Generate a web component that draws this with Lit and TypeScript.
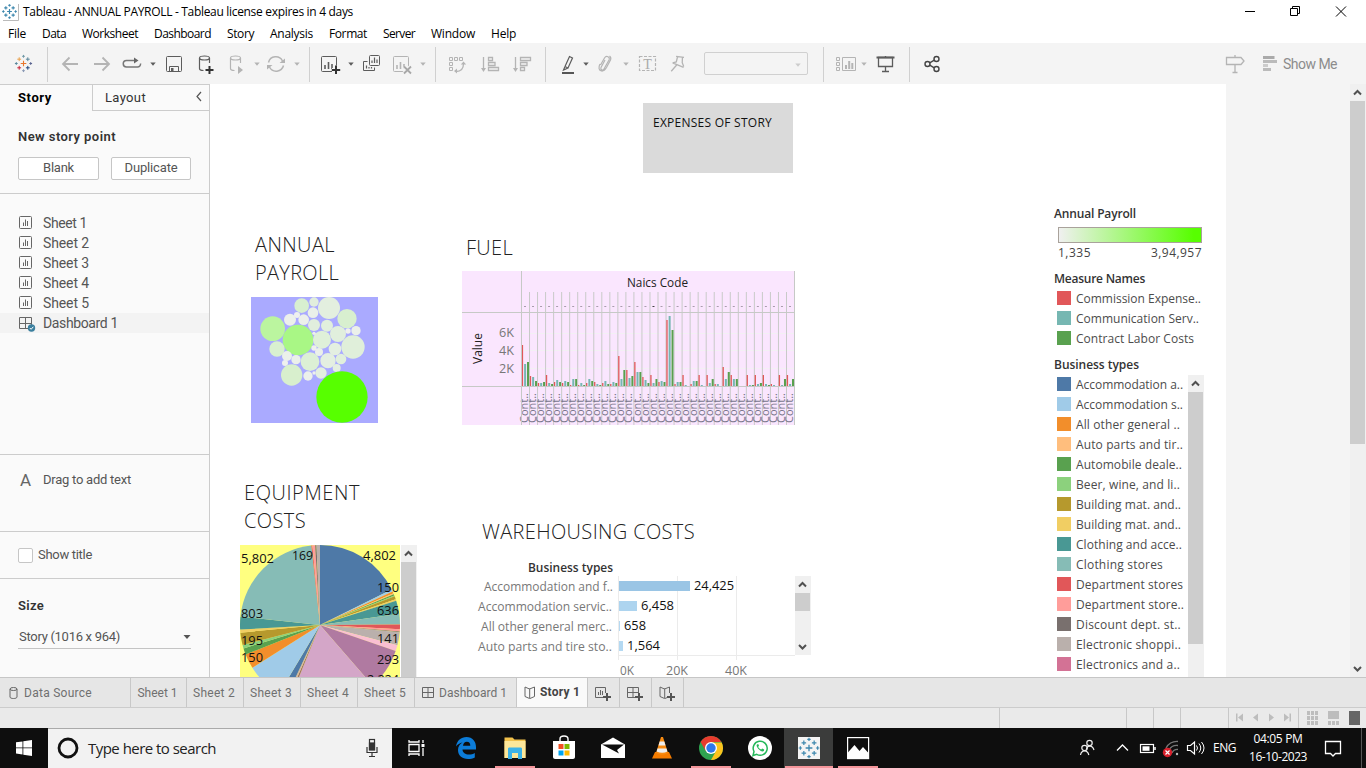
import { LitElement, html, svg, css, unsafeCSS, nothing } from "lit";
import { customElement, property } from "lit/decorators.js";

/* Text tracked so that it fills a given width. */
@customElement("fit-text")
class FitText extends LitElement {
  @property() text = "";
  @property({ type: Number }) w = 0;
  static styles = css`
    :host { display: inline-block; white-space: pre; flex: none; }
    span { display: inline-block; }
  `;
  render() {
    return html`<span>${this.text}</span>`;
  }
  updated() {
    const s = this.renderRoot.querySelector("span") as HTMLElement;
    s.style.letterSpacing = "0px";
    const natural = s.getBoundingClientRect().width;
    if (this.w && natural) s.style.letterSpacing = (this.w - natural) / this.text.length + "px";
  }
}

const t = (text: string, w: number, cls = "") => html`<fit-text class=${cls} .text=${text} .w=${w}></fit-text>`;

/* SVG text with a fixed advance. */
const st = (text: string, x: number, y: number, w: number, cls: string) =>
  svg`<text x=${x} y=${y} textLength=${w} lengthAdjust="spacingAndGlyphs" class=${cls}>${text}</text>`;

const G = "#b4b4b4";
const D = "#5c5c5c";

const plus = (x: number, y: number, r: number, c: string, w = 1) =>
  svg`<path d="M${x - r} ${y}H${x + r}M${x} ${y - r}V${y + r}" stroke=${c} stroke-width=${w} fill="none"/>`;

const mark = (cx: number, cy: number, s: number, c: string[], w: number) => svg`
  ${plus(cx, cy, 2.8 * s, c[0], w * 1.1)}
  ${plus(cx - 4.3 * s, cy - 4.3 * s, 1.9 * s, c[1], w)}${plus(cx + 4.3 * s, cy - 4.3 * s, 1.9 * s, c[2], w)}
  ${plus(cx - 4.3 * s, cy + 4.3 * s, 1.9 * s, c[3], w)}${plus(cx + 4.3 * s, cy + 4.3 * s, 1.9 * s, c[4], w)}
  ${plus(cx, cy - 7.2 * s, 1.4 * s, c[5], w)}${plus(cx, cy + 7.2 * s, 1.4 * s, c[6], w)}
  ${plus(cx - 7.2 * s, cy, 1.4 * s, c[7], w)}${plus(cx + 7.2 * s, cy, 1.4 * s, c[8], w)}`;
const BLUES = Array(9).fill("#3d87ad");
const BRAND = ["#e8762c", "#e8a04c", "#5b879b", "#c72035", "#1f457e", "#7199a6", "#8a99b5", "#59879b", "#5c6692"];

const ic = (body: unknown, w = 24) => html`<svg width=${w} height="24" viewBox="0 0 ${w} 24" fill="none">${body}</svg>`;
const caret = (c: string) => ic(svg`<path d="M1.300 10.500h5.400L4 13.700z" fill=${c}/>`, 8);
const sep = () => html`<i class="sep"></i>`;
const bars = (c: string) => svg`<rect x="3.500" y="4.500" width="15" height="15" rx="1" stroke=${c}/><path d="M7 17v-4M10.500 17v-7M14 17v-5" stroke=${c} stroke-width="1.600"/>`;
const db = svg`<ellipse cx="10.500" cy="6" rx="5" ry="2" /><path d="M5.500 6v10.500c0 1.300 2 2 4 2M15.500 6v5" />`;

/* Toolbar: left edge of each tool and its drawing. */
const TOOLS: [number, unknown][] = [
  [12, ic(mark(11.5, 11.5, 1, BRAND, 1))],
  [47, sep()],
  [58, ic(svg`<path d="M20 12H5M11.500 5.500L5 12l6.500 6.500" stroke=${G} stroke-width="1.800"/>`)],
  [90, ic(svg`<path d="M4 12h15M12.500 5.500L19 12l-6.500 6.500" stroke=${G} stroke-width="1.800"/>`)],
  [120, ic(svg`<path d="M15 8.500H6.500a3 3 0 0 0 0 6.500H17.500a3 3 0 0 0 3-3.500" stroke="#777" stroke-width="1.500"/><path d="M14 5.500l4.500 3L14 11.500z" fill="#666"/>`)],
  [148.5, caret(D)],
  [162, ic(svg`<rect x="4.500" y="4.500" width="15" height="15" rx="1" stroke=${D}/><path d="M7.500 19.500v-5h9v5" stroke=${D}/><rect x="9" y="16" width="2.500" height="3.500" fill=${D}/>`)],
  [194, ic(svg`<g stroke=${D} stroke-width="1.200">${db}</g><path d="M15.500 14v8M11.500 18h8" stroke="#333" stroke-width="2"/>`)],
  [225, ic(svg`<g stroke=${G} stroke-width="1.200">${db}</g><path d="M13 14l5 4-5 4z" fill=${G}/>`)],
  [252.5, caret(G)],
  [264, ic(svg`<path d="M4.500 10.500a7.500 7.500 0 0 1 14-1.500M19.500 13.500a7.500 7.500 0 0 1-14 1.500" stroke=${G} stroke-width="1.500"/><path d="M21 6.500V11h-5.500zM3 17.500V13h5.500z" fill=${G}/>`)],
  [292.5, caret(G)],
  [309, sep()],
  [318, ic(svg`${bars(D)}<path d="M18 13.500v8.500M14 18h8" stroke="#f4f4f4" stroke-width="4"/><path d="M18 13.500v8.500M13.800 18h8.400" stroke="#333" stroke-width="2"/>`)],
  [346.5, caret(D)],
  [359, ic(svg`<rect x="10.500" y="3.500" width="10" height="10" rx="1" stroke=${D}/><path d="M13 11V8.500M15.500 11V5.500M18 11V7.500" stroke=${D} stroke-width="1.200"/><path d="M8.500 9.500h-4v9h11v-3" stroke=${D}/><path d="M7.500 16.500v-3M10 16.500v-1.500M12.500 16.500v-1.500" stroke=${D} stroke-width="1.200"/>`)],
  [390, ic(svg`${bars(G)}<path d="M14 14.500l7 7M21 14.500l-7 7" stroke="#f4f4f4" stroke-width="4"/><path d="M14 14.500l7 7M21 14.500l-7 7" stroke="#a8a8a8" stroke-width="1.800"/>`)],
  [418.5, caret(G)],
  [435, sep()],
  [445, ic(svg`<g stroke=${G}><path d="M4.500 5.500h3v3h-3zM9.500 5.500h3v3h-3zM14.500 5.500h3v3h-3zM4.500 10.500h3v3h-3zM4.500 15.500h3v3h-3z"/><path d="M11 19.500c5.500 0 7.500-3 7.500-8" stroke-width="1.300"/></g><path d="M15.800 12.500l2.700-3 2.700 3zM12 16.500v5l-3-2.500z" fill=${G}/>`)],
  [478, ic(svg`<g stroke=${G} stroke-width="1.300"><path d="M5.500 5v13M10.500 5.500h4v3h-4zM10.500 10.500h6.500v3h-6.500zM10.500 15.500h10v3h-10z"/></g><path d="M3 16h5l-2.500 4z" fill=${G}/>`)],
  [510, ic(svg`<g stroke=${G} stroke-width="1.300"><path d="M5.500 5v13M10.500 5.500h10v3h-10zM10.500 10.500h6.500v3h-6.500zM10.500 15.500h4v3h-4z"/></g><path d="M3 16h5l-2.500 4z" fill=${G}/>`)],
  [545, sep()],
  [556, ic(svg`<path d="M13.500 4.500l3 1.500-4.500 10-3-1.500zM9 14.500L7.500 18l4.500-2" stroke=${D} stroke-width="1.200"/><path d="M6 21h12" stroke="#555" stroke-width="2"/>`)],
  [581.5, caret(D)],
  [593, ic(svg`<path d="M7.500 13l4-7c1.800-3 6-1 4.500 2l-5 9c-1 2-4 .8-3-1.500l4-7.500M7 12c-2 3.500-1 6.500 1.500 7s3.500-1 5-3.500l4-7.500c.8-2 .3-3-1-4" stroke=${G} stroke-width="1.200"/>`)],
  [621.5, caret(G)],
  [635, ic(svg`<rect x="4.500" y="4.500" width="16" height="14" stroke=${G} stroke-dasharray="3 1.500" stroke-width="1.200"/><text x="8.300" y="16.500" class="serif">T</text>`)],
  [665, ic(svg`<path d="M10 4.500h8M11.500 5l-.5 5-3.500 1.500M16.500 5l.5 5 2 3.500M7.500 11.500l11.500 3M11.800 13l-4.500 7" transform="rotate(8 12 12)" stroke=${G} stroke-width="1.300"/>`)],
  [704, html`<span class="combo">${caret("#ccc")}</span>`],
  [823, sep()],
  [834, ic(svg`<path d="M2.500 5.500h3v3h-3zM2.500 10.500h3v3h-3zM2.500 15.500h3v3h-3zM8.500 5.500h13v13h-13z" stroke=${G}/><path d="M12 17v-4M15.200 17V9M18.300 17v-6" stroke=${G} stroke-width="2"/>`)],
  [859.5, caret(G)],
  [873, ic(svg`<path d="M3.500 5.500h18" stroke=${D} stroke-width="2"/><path d="M5.500 5.500h14v9h-14zM12.500 4v2M12.500 14.500v5M9 19.500h7" stroke=${D} stroke-width="1.300"/>`)],
  [909, sep()],
  [920, ic(svg`<g stroke="#444" stroke-width="1.400"><circle cx="7.500" cy="12" r="2.500"/><circle cx="16.500" cy="7" r="2.500"/><circle cx="16.500" cy="17" r="2.500"/><path d="M9.700 10.800l4.600-2.600M9.700 13.200l4.600 2.600"/></g>`)],
  [1223, ic(svg`<path d="M3.500 5.500h14.500l3 3.500-3 3.500H3.500zM12 3v2.500M12 12.500v7.500M9.500 20.500h5" stroke=${G} stroke-width="1.300"/>`)],
  [1259, ic(svg`<path d="M4 5.500h11.500" stroke="#aaa" stroke-width="3"/><path d="M4 9.500h14M4 17.500h8" stroke="#bbb" stroke-width="3"/><path d="M4 13.500h5" stroke="#ccc" stroke-width="3"/>`)],
  [1283, html`<span class="showme">${t("Show Me", 54)}</span>`],
];

/* Notification area, same scheme. */
const TRAY: [number, unknown][] = [
  [1075, ic(svg`<g stroke="#eee" stroke-width="1.200"><circle cx="14.500" cy="7" r="2.700"/><path d="M11.500 13c1-4 6-4 7.500 1"/><circle cx="9.500" cy="12" r="2.700"/><path d="M5.500 19c1-5.500 7-5.500 8.300 0"/></g>`)],
  [1110, ic(svg`<path d="M7 14.500l5.500-5.500 5.500 5.500" stroke="#fff" stroke-width="1.300"/>`)],
  [1135, ic(svg`<rect x="5.500" y="8.500" width="13" height="8" stroke="#fff" stroke-width="1.200"/><rect x="7.500" y="10.300" width="7" height="4.500" fill="#fff"/><path d="M20 11v3" stroke="#fff" stroke-width="1.500"/>`)],
  [1159, ic(svg`<g stroke="#777" stroke-width="1.300"><path d="M7 12A13 13 0 0 1 19 5.500M10 14A9 9 0 0 1 19 9.500M13 17A6 6 0 0 1 19 13.500"/></g><circle cx="18" cy="18" r="1.200" fill="#bbb"/><circle cx="8.500" cy="16.500" r="4.700" fill="#d8202c"/><path d="M6.500 14.500l4 4M10.500 14.500l-4 4" stroke="#fff" stroke-width="1.200"/>`)],
  [1183, ic(svg`<path d="M4.500 9.500h3l4-3.500v12l-4-3.500h-3z" stroke="#fff" stroke-width="1.200"/><path d="M13.500 9.500q2 2.500 0 5M16 7.500q3.500 4.500 0 9M18.500 6q5 6 0 12" stroke="#fff"/>`)],
  [1213, html`<span class="eng">${t("ENG", 23)}</span>`],
  [1249, html`<span class="clock"><span>${t("04:05 PM", 49)}</span><span>${t("16-10-2023", 58)}</span></span>`],
  [1321, ic(svg`<path d="M4.500 5.500h15v12h-5l-2.500 2.500-2.500-2.500h-5z" stroke="#fff" stroke-width="1.300"/>`)],
];

const columns = (list: [number, unknown][], end: number) =>
  unsafeCSS(list.map(([x], i) => (i + 1 < list.length ? list[i + 1][0] : end) - x + "px").join(" "));

const MENU: [string, number][] = [
  ["File", 18], ["Data", 24], ["Worksheet", 56], ["Dashboard", 57], ["Story", 27],
  ["Analysis", 43], ["Format", 38], ["Server", 32], ["Window", 44], ["Help", 25],
];

const FUEL = [
  [123, 66, 72], [30, 27, 15], [9, 9, 12], [33, 9, 6], [12, 18, 12], [9, 15, 12], [3, 21, 21], [3, 9, 3], [9, 21, 15],
  [12, 6, 3], [9, 15, 6], [6, 12, 9], [90, 21, 48], [48, 24, 30], [72, 42, 42], [27, 18, 9], [33, 9, 21], [12, 15, 12],
  [198, 210, 168], [6, 12, 12], [33, 3, 0], [6, 15, 15], [33, 3, 0], [33, 9, 21], [6, 6, 0], [57, 21, 42], [33, 21, 21],
  [0, 0, 0], [33, 3, 3], [33, 6, 9], [33, 6, 3], [6, 3, 0], [33, 3, 21], [33, 6, 21],
];

/* Bubbles: x, y, radius, fill. */
const BUBBLES: [number, number, number, string][] = [
  [128, 146, 37, "#bbf59f"], [204, 180, 46, "#a9f785"], [215, 77, 22, "#d8efd0"], [252, 66, 14, "#e1eedd"], [297, 84, 33, "#e3efdf"],
  [351, 116, 29, "#d8efcf"], [180, 119, 18, "#ecf0eb"], [201, 105, 9, "#eef0ee"], [221, 119, 16, "#ecf0eb"], [249, 98, 16, "#eaf0e9"],
  [252, 135, 18, "#e1eedd"], [291, 137, 18, "#e1efdd"], [324, 162, 24, "#e1efdd"], [354, 153, 8, "#eef0ee"], [378, 152, 14, "#ebf0ea"],
  [276, 179, 27, "#dff0d9"], [252, 160, 5, "#eef0ee"], [369, 201, 35, "#e0efda"], [315, 207, 19, "#e4efe1"], [141, 207, 23, "#d9f0d0"],
  [252, 204, 8, "#eef0ee"], [267, 216, 12, "#ebf0ea"], [171, 228, 15, "#ebf0ea"], [165, 249, 9, "#eef0ee"], [198, 239, 14, "#ebf0ea"],
  [240, 245, 28, "#dcf0d5"], [294, 242, 23, "#e4efe1"], [333, 237, 16, "#e1efdd"], [320, 264, 12, "#e4efe1"], [185, 285, 32, "#d8efcd"],
  [234, 288, 14, "#ecf0eb"], [252, 279, 5, "#eef0ee"], [273, 279, 17, "#e4efe0"], [336, 351, 77, "#57ff00"],
];

/* Pie slices: end angle in degrees clockwise from noon, fill. */
const PIE: [number, string][] = [
  [63.7, "#4e79a7"], [65.3, "#a0cbe8"], [66.7, "#f28e2b"], [67.3, "#ffbe7d"], [68.3, "#59a14f"], [69, "#8cd17d"], [71.2, "#b6992d"],
  [72.3, "#f1ce63"], [82, "#499894"], [89.7, "#86bcb6"], [93, "#e15759"], [94.6, "#ff9d9a"], [95.2, "#79706e"], [104.7, "#bab0ac"],
  [109, "#fabfd2"], [139, "#b07aa1"], [202, "#d4a6c8"], [203.5, "#9d7660"], [205, "#d7b5a6"], [210.8, "#4e79a7"], [237.7, "#a0cbe8"],
  [248.4, "#f28e2b"], [253, "#59a14f"], [255.5, "#8cd17d"], [264.5, "#b6992d"], [266.7, "#f1ce63"], [276, "#499894"], [353.8, "#86bcb6"],
  [354.5, "#e15759"], [356.5, "#ff9d9a"], [357.5, "#79706e"], [360, "#bab0ac"],
];
const slice = (a: number, b: number, c: string) => {
  const p = (d: number) => `${80 + 80 * Math.sin((d * Math.PI) / 180)} ${80 - 80 * Math.cos((d * Math.PI) / 180)}`;
  return svg`<path d="M80 80L${p(a)}A80 80 0 0 1 ${p(b)}z" fill=${c}/>`;
};

const TYPES: [string, number, string][] = [
  ["Accommodation a..", 107, "#4e79a7"], ["Accommodation s..", 107, "#a0cbe8"], ["All other general ..", 104, "#f28e2b"],
  ["Auto parts and tir..", 107, "#ffbe7d"], ["Automobile deale..", 106, "#59a14f"], ["Beer, wine, and li..", 104, "#8cd17d"],
  ["Building mat. and..", 105, "#b6992d"], ["Building mat. and..", 105, "#f1ce63"], ["Clothing and acce..", 106, "#499894"],
  ["Clothing stores", 87, "#86bcb6"], ["Department stores", 107, "#e15759"], ["Department store..", 108, "#ff9d9a"],
  ["Discount dept. st..", 105, "#79706e"], ["Electronic shoppi..", 105, "#bab0ac"], ["Electronics and a..", 104, "#d37295"],
];

const scrollArrow = (up: boolean) => html`<svg class="arrow" width="15" height="17" viewBox="0 0 15 17" fill="none">
  <path d=${up ? "M4 10.500L7.500 7L11 10.500" : "M4 7L7.500 10.500L11 7"} stroke="#505050" stroke-width="2"/></svg>`;

const sheetIcon = html`<svg width="14" height="14" viewBox="0 0 14 14" fill="none" stroke="#666"><rect x=".5" y=".5" width="12" height="12" rx="1"/><path d="M4.500 10V6.500M6.500 10V3.500M8.500 10V5"/></svg>`;
const dashIcon = html`<svg width="18" height="17" viewBox="0 0 18 17" fill="none" stroke="#666"><path d="M.5 2.500h12v11H.5zM6.500 2.500v11M.5 8.500h12"/><circle cx="12.500" cy="13" r="3.700" fill="#3b7f9e" stroke="none"/><path d="M10.800 13l1.300 1.300 2.200-2.500" stroke="#fff"/></svg>`;
const grid = svg`<path d="M.5 2.500h11v10H.5zM6 2.500v10M.5 7.500h11" />`;
const book = svg`<path d="M1 2l4 1.800h1L10.500 2v9.500L6 13.500H5.500L1 11.500zM5.700 4v9"/>`;
const addMark = svg`<path d="M12 8v8M8 12h8" stroke="#e6e6e6" stroke-width="4"/><path d="M12 8v8M8 12h8" stroke="#555" stroke-width="2"/>`;
const tabIcon = (b: unknown, w = 14) => html`<svg width=${w} height="16" viewBox="0 0 ${w} 16" fill="none" stroke="#666">${b}</svg>`;

const app = (b: unknown, cls = "") => html`<span class="app ${cls}"><svg width="30" height="30" viewBox="0 0 30 30" fill="none">${b}</svg></span>`;

@customElement("app-root")
class AppRoot extends LitElement {
  static styles = css`
    :host { display: flex; flex-direction: column; width: 1366px; height: 768px; overflow: hidden; background: #fff;
      font: 12px/20px "Open Sans", "Noto Sans", sans-serif; color: #000; }
    * { box-sizing: border-box; }
    svg { display: block; flex: none; }
    .title { display: flex; height: 23px; padding-left: 2px; align-items: center; }
    .title .name { margin-left: 4px; flex: 1; }
    .menu { display: flex; gap: 16px; height: 20px; padding-left: 8px; line-height: 21px; }
    .toolbar { display: grid; grid-template-columns: ${columns(TOOLS, 1354)}; height: 41px; padding: 9px 0 0 12px; background: #f4f4f4; }
    .sep { display: block; width: 1px; height: 35px; margin-top: -5px; background: #d0d0d0; }
    .serif { font: 14px "Liberation Serif", serif; fill: #aaa; }
    .combo { display: flex; justify-content: flex-end; width: 104px; height: 23px; padding-right: 5px; border: 1px solid #d0d0d0; border-radius: 2px; }
    .showme { font: 14px/24px Roboto, sans-serif; color: #8c8c8c; }

    .main { display: flex; height: 593px; }
    .side { display: flex; flex-direction: column; width: 210px; border-right: 1px solid #ccc; border-top: 1px solid #ccc; background: #fafafa;
      font: 13px/20px Roboto, "Open Sans", sans-serif; color: #555; }
    .sidetabs { display: flex; height: 26px; }
    .sidetabs .on { width: 92px; padding-left: 18px; line-height: 25px; font-weight: 700; color: #000; }
    .sidetabs .off { display: flex; flex: 1; justify-content: space-between; padding: 0 6px 0 12px; border-left: 1px solid #ccc; border-bottom: 1px solid #ccc; line-height: 25px; color: #333; }
    .pane { border-bottom: 1px solid #ccc; padding-left: 18px; }
    .head { font-weight: 600; color: #333; }
    .p1 { height: 83px; padding-top: 16px; }
    .btns { display: flex; gap: 12px; margin-top: 10px; }
    .btns span { display: flex; justify-content: center; width: 81px; height: 23px; border: 1px solid #c6c6c6; border-radius: 2px; background: #fff; line-height: 20px; }
    .btns span + span { width: 80px; }
    .p2 { height: 261px; padding: 19px 0 0; }
    .sheet { display: flex; align-items: center; gap: 10px; height: 20px; padding-left: 19px; font-size: 14px; line-height: 22px; }
    .sheet.sel { gap: 6px; background: #f3f3f3; }
    .p3 { height: 77px; padding-top: 15px; display: flex; }
    .p3 b { width: 25px; padding-left: 2px; font: 17px/20px Roboto, sans-serif; color: #666; }
    .p4 { display: flex; align-items: center; height: 47px; gap: 5px; }
    .box { width: 15px; height: 15px; border: 1px solid #c6c6c6; border-radius: 2px; background: #fff; }
    .p5 { padding: 17px 0 0 18px; }
    .size { display: flex; justify-content: space-between; width: 173px; margin-top: 11px; padding: 0 0 1px 1px; border-bottom: 1px solid #c4c4c4; }

    .canvas { width: 1016px; overflow: hidden; background: #fff; color: #333; }
    .caption { width: 150px; height: 70px; margin: 19px auto 0; padding: 10px; background: #dadada; color: #111; }
    .objects { display: flex; height: 504px; }
    .colA { width: 252px; }
    .colB { width: 592px; }
    .colC { width: 172px; padding-top: 31px; }
    .h { font: 300 20px/28px "Open Sans", "Noto Sans", sans-serif; color: #222; }
    .h fit-text { display: block; }
    .hA { padding: 58px 0 0 45px; }
    .bub { margin: 10px 0 0 41px; }
    .hE { padding: 56px 0 0 34px; }
    .pie { display: flex; margin: 10px 0 0 30px; }
    .hF { padding: 61px 0 0 4px; }
    .fuel { margin-top: 9px; }
    .hW { padding: 93px 0 0 20px; }
    .ware { display: flex; margin: 10px 0 0 8px; }
    .v, .vl, .vm, .vs { font: 12px "Open Sans", "Noto Sans", sans-serif; fill: #111; }
    .vl { fill: #777; }
    .vs { font-weight: 600; fill: #333; }
    .vm { fill: #222; }
    .col { font: 10px "Open Sans", "Noto Sans", sans-serif; fill: #77758a; }
    .sb { display: flex; flex-direction: column; width: 16px; background: #f0f0f0; }
    .sb i { display: block; background: #cdcdcd; }
    .sbPie { height: 132px; margin-left: 1px; }
    .sbPie i { flex: 1; width: 15px; }
    .sbWare { height: 79px; margin-top: 20px; }
    .sbWare i { height: 18px; width: 15px; flex: none; }
    .sbLeg { height: 303px; }
    .sbLeg i { height: 252px; width: 15px; }
    .sbMain { height: 593px; margin-left: 1px; }
    .sbMain i { height: 343px; width: 15px; }
    .sbWare .arrow:last-child, .sbMain .arrow:last-child { margin-top: auto; }
    .lt { display: block; font-weight: 600; color: #333; }
    .ramp { width: 144px; height: 16px; margin: 3px 0 0 4px; border: 1px solid #a9a29b; background: linear-gradient(90deg, #f0f0f0, #57ff00 95%); }
    .range { display: flex; justify-content: space-between; width: 144px; margin-left: 4px; color: #444; }
    .mn, .bt { margin-top: 6px; }
    .leg { display: flex; align-items: center; gap: 5px; height: 20px; padding-left: 3px; color: #4c4c4c; }
    .leg svg { margin-top: -2px; }
    .biz { display: flex; }
    .biz > div:first-child { width: 134px; }
    .gutter { flex: 1; display: flex; justify-content: flex-end; background: #f4f4f4; }

    .tabs { display: grid; grid-template-columns: 131px 56px 57px 57px 57px 57px 102px 71px 32px 32px 32px 1fr; height: 31px;
      border-top: 1px solid #c6c6c6; border-bottom: 1px solid #ccc; background: #e6e6e6; font: 12px/30px Roboto, sans-serif; color: #707070; }
    .tabs > span { display: flex; align-items: center; justify-content: center; gap: 5px; height: 29px; padding-right: 2px; border-right: 1px solid #c8c8c8; }
    .tabs > span:first-child { justify-content: flex-start; padding-left: 8px; gap: 2px; }
    .tabs > span:last-child { border: 0; }
    .tabs .on { background: #fafafa; font-weight: 700; color: #444; gap: 4px; padding: 0; line-height: 29px; }
    .status { display: grid; grid-template-columns: 1000px 127px 27px 27px 48px 70px 1fr; height: 20px; background: #eaeaea; }
    .status > span { display: flex; align-items: center; border-right: 1px solid #c8c8c8; }
    .status > span:last-child { border: 0; }

    .taskbar { display: flex; height: 40px; background: #0e0e0e; color: #fff; }
    .start { display: flex; align-items: center; justify-content: center; width: 48px; }
    .search { display: flex; align-items: center; width: 344px; padding: 0 13px 1px 9px; border-top: 1px solid #aaa; background: #f2f2f2; color: #222; font-size: 15px; }
    .search fit-text { flex: 1; margin: -1px 0 0 9px; }
    .apps { display: flex; width: 683px; padding-left: 1px; }
    .app { display: flex; align-items: center; justify-content: center; width: 49px; height: 40px; }
    .app:first-child { width: 48px; }
    .run { background: linear-gradient(#f4959a, #f4959a) center bottom / 40px 2px no-repeat; }
    .cur { background: linear-gradient(#f4959a, #f4959a) center bottom / 48px 2px no-repeat #3b3c3b; }
    .tray { display: grid; grid-template-columns: ${columns(TRAY, 1361)}; padding-top: 8px; }
    .eng { line-height: 24px; }
    .clock { display: flex; flex-direction: column; width: 58px; height: 36px; margin-top: -6px; line-height: 18px; align-items: center; }
    .edge { margin-left: auto; width: 5px; border-left: 1px solid #555; }
  `;

  fuel() {
    const step = 8.03;
    return html`<svg class="fuel" width="333" height="154" viewBox="0 0 333 154" fill="none">
      <rect width="333" height="154" fill="#fae6fe"/>
      <path d="M60 62.500H332M60 79.500H332M60 97.500H332" stroke="#f3f0f4"/>
      ${FUEL.map((b, i) => {
        const x = 59.5 + i * step;
        return svg`${i ? svg`<path d="M${x} 21V154" stroke="#c8cac8"/>` : nothing}
          <path d="M${x + 2.5} 35.500h2" stroke=${i === 16 ? "#444" : "#a89cac"}/>
          <rect x=${x + 0.3} y=${115 - b[0] / 3} width="1.300" height=${b[0] / 3} fill="#e15759"/>
          <rect x=${x + 2.6} y=${115 - b[1] / 3} width="2" height=${b[1] / 3} fill="#76b7b2"/>
          <rect x=${x + 5.5} y=${115 - b[2] / 3} width="2.200" height=${b[2] / 3} fill="#59a14f"/>
          <text transform="translate(${x + 6.6} 152) rotate(-90)" textLength="30" lengthAdjust="spacingAndGlyphs" class="col">Cont..</text>`;
      })}
      <path d="M59.500 0V154M332.500 0V154M0 41.500H333M0 115.500H333" stroke="#c6c9c6"/>
      ${st("Naics Code", 165, 16, 61, "vm")}
      <text transform="translate(20 93) rotate(-90)" textLength="31" class="vm">Value</text>
      ${st("6K", 37, 66, 15, "vl")}${st("4K", 37, 84, 15, "vl")}${st("2K", 37, 102, 15, "vl")}
    </svg>`;
  }

  warehouse() {
    const rows: [string, number, number, number, string, number, string][] = [
      ["Accommodation and f..", 14, 129, 71, "24,425", 40, "#9ac5e5"],
      ["Accommodation servic..", 8, 134, 18, "6,458", 33, "#add4ef"],
      ["All other general merc..", 11, 131, 1, "658", 22, "#b5d9f2"],
      ["Auto parts and tire sto..", 8, 134, 4, "1,564", 33, "#b4d9f2"],
    ];
    return html`<svg width="325" height="121" viewBox="0 0 325 121" fill="none">
      <path d="M148.500 20V104M207.500 20V104M266.500 20V104M148 99.500H325" stroke="#ebebeb"/>
      ${st("Business types", 58, 16, 85, "vs")}
      ${rows.map((r, i) => svg`${st(r[0], r[1], 35 + i * 20, r[2], "vl")}
        <rect x="149" y=${25 + i * 20} width=${r[3]} height="10" fill=${r[6]}/>
        ${st(r[4], [224, 171, 154, 157][i], 34 + i * 20, r[5], "v")}`)}
      ${st("0K", 150, 119, 14, "vl")}${st("20K", 196, 119, 22, "vl")}${st("40K", 255, 119, 22, "vl")}
    </svg>`;
  }

  pie() {
    return html`<svg width="160" height="132" viewBox="0 0 160 132">
      <rect width="160" height="132" fill="#ffff80"/>
      ${PIE.map(([b, c], i) => slice(i ? PIE[i - 1][0] : 0, b, c))}
      ${st("5,802", 1, 18, 33, "v")}${st("169", 52, 15, 21, "v")}${st("4,802", 123, 15, 33, "v")}
      ${st("150", 137, 47, 22, "v")}${st("636", 137, 70, 22, "v")}${st("803", 1, 73, 22, "v")}
      ${st("195", 1, 100, 22, "v")}${st("141", 137, 98, 22, "v")}${st("150", 1, 117, 22, "v")}
      ${st("293", 137, 119, 22, "v")}${st("2,224", 127, 139, 32, "v")}
    </svg>`;
  }

  swatch(c: string) {
    return html`<svg width="14" height="14"><rect width="14" height="14" fill=${c}/></svg>`;
  }

  render() {
    return html`
      <div class="title">
        <svg width="17" height="18" viewBox="0 0 17 18"><path d="M16.500 1v16.500H1" stroke="#bbb" fill="none"/>${mark(7.5, 8.5, 0.85, BLUES, 1.1)}</svg>
        <span class="name">${t("Tableau - ANNUAL PAYROLL - Tableau license expires in 4 days", 330)}</span>
        <svg width="121" height="22" viewBox="0 0 121 22" fill="none" stroke="#000"><path d="M0 10.500h10M45.500 7.500h7v7h-7zM47.500 7.500v-2h7v7h-2M91 5.500l10 10M101 5.500l-10 10"/></svg>
      </div>
      <div class="menu">${MENU.map(([s, w]) => t(s, w))}</div>
      <div class="toolbar">${TOOLS.map(([, v]) => v)}</div>
      <div class="main">
        <div class="side">
          <div class="sidetabs">
            <span class="on">${t("Story", 34)}</span>
            <span class="off">${t("Layout", 41)}<svg width="8" height="24" viewBox="0 0 8 24" fill="none"><path d="M6 7L2 11.500l4 4.500" stroke="#555" stroke-width="1.200"/></svg></span>
          </div>
          <div class="pane p1">
            <div class="head">${t("New story point", 98)}</div>
            <div class="btns"><span>${t("Blank", 31)}</span><span>${t("Duplicate", 53)}</span></div>
          </div>
          <div class="pane p2">
            ${[1, 2, 3, 4, 5].map((n) => html`<div class="sheet">${sheetIcon}${t("Sheet " + n, n === 1 ? 44 : 46)}</div>`)}
            <div class="sheet sel">${dashIcon}${t("Dashboard 1", 75)}</div>
          </div>
          <div class="pane p3"><b>A</b>${t("Drag to add text", 88)}</div>
          <div class="pane p4"><i class="box"></i>${t("Show title", 54)}</div>
          <div class="p5">
            <div class="head">${t("Size", 26)}</div>
            <div class="size">${t("Story (1016 x 964)", 101)}<svg width="8" height="20" viewBox="0 0 8 20"><path d="M.5 8h7L4 12z" fill="#555"/></svg></div>
          </div>
        </div>
        <div class="canvas">
          <div class="caption">${t("EXPENSES OF STORY", 119)}</div>
          <div class="objects">
            <div class="colA">
              <div class="h hA">${t("ANNUAL", 80)}${t("PAYROLL", 84)}</div>
              <svg class="bub" width="127" height="126" viewBox="63 51 381 378"><rect x="63" y="51" width="381" height="378" fill="#aaaaff"/>
                ${BUBBLES.map(([x, y, r, c]) => svg`<circle cx=${x} cy=${y} r=${r} fill=${c}/>`)}</svg>
              <div class="h hE">${t("EQUIPMENT", 116)}${t("COSTS", 62)}</div>
              <div class="pie">${this.pie()}<div class="sb sbPie">${scrollArrow(true)}<i></i></div></div>
            </div>
            <div class="colB">
              <div class="h hF">${t("FUEL", 47)}</div>
              ${this.fuel()}
              <div class="h hW">${t("WAREHOUSING COSTS", 213)}</div>
              <div class="ware">${this.warehouse()}<div class="sb sbWare">${scrollArrow(true)}<i></i>${scrollArrow(false)}</div></div>
            </div>
            <div class="colC">
              <span class="lt">${t("Annual Payroll", 82)}</span>
              <div class="ramp"></div>
              <div class="range">${t("1,335", 33)}${t("3,94,957", 51)}</div>
              <span class="lt mn">${t("Measure Names", 91)}</span>
              <div class="leg">${this.swatch("#e15759")}${t("Commission Expense..", 125)}</div>
              <div class="leg">${this.swatch("#76b7b2")}${t("Communication Serv..", 123)}</div>
              <div class="leg">${this.swatch("#59a14f")}${t("Contract Labor Costs", 118)}</div>
              <span class="lt bt">${t("Business types", 85)}</span>
              <div class="biz">
                <div>${TYPES.map(([s, w, c]) => html`<div class="leg">${this.swatch(c)}${t(s, w)}</div>`)}</div>
                <div class="sb sbLeg">${scrollArrow(true)}<i></i></div>
              </div>
            </div>
          </div>
        </div>
        <div class="gutter"><div class="sb sbMain">${scrollArrow(true)}<i></i>${scrollArrow(false)}</div></div>
      </div>
      <div class="tabs">
        <span>${tabIcon(svg`<ellipse cx="5.500" cy="4" rx="3.500" ry="1.500"/><path d="M2 4v8c0 2 7 2 7 0V4"/>`)}${t("Data Source", 68)}</span>
        ${[1, 2, 3, 4, 5].map((n) => html`<span>${t("Sheet " + n, n === 1 ? 40 : 42)}</span>`)}
        <span>${tabIcon(grid, 12)}${t("Dashboard 1", 68)}</span>
        <span class="on">${tabIcon(book, 12)}${t("Story 1", 40)}</span>
        <span>${tabIcon(svg`<path d="M.5 2.500h10v10H.5zM3.500 10V7M5.500 10V5M7.500 10V6"/>${addMark}`, 16)}</span>
        <span>${tabIcon(svg`${grid}${addMark}`, 16)}</span>
        <span>${tabIcon(svg`${book}${addMark}`, 16)}</span>
        <span></span>
      </div>
      <div class="status">
        <span></span><span></span><span></span><span></span><span></span>
        <span><svg width="68" height="18" viewBox="0 0 68 18" fill="#bdbdbd"><path d="M7 5h1.500v8H7zM14 5v8L9 9zM29 5v8l-5-4zM40 5v8l5-4zM55 5v8l5-4zM60.500 5H62v8h-1.500z" transform="translate(0 -.5)"/></svg></span>
        <span><svg width="64" height="18" viewBox="0 0 64 18" fill="#bdbdbd">
          ${[2, 7, 12].map((y) => [8, 12, 16].map((x) => svg`<rect x=${x} y=${y} width="3" height="4"/>`))}
          <rect x="29" y="2" width="11" height="8"/><path d="M29 12h3v4h-3zM33 12h3v4h-3zM37 12h3v4h-3z"/>
          <rect x="50" y="2" width="11" height="14" fill="#666"/></svg></span>
      </div>
      <div class="taskbar">
        <span class="start"><svg width="16" height="16" viewBox="0 0 16 16" fill="#fff"><path d="M0 2.300L6.500 1.400v6.100H0zM7.300 1.300L16 0v7.500H7.300zM0 8.300h6.500v6.200L0 13.600zM7.300 8.300H16V16l-8.700-1.300z"/></svg></span>
        <div class="search">
          <svg width="22" height="24" viewBox="0 0 22 24"><circle cx="11" cy="12" r="9" fill="none" stroke="#111" stroke-width="2.800"/></svg>
          ${t("Type here to search", 128)}
          <svg width="14" height="20" viewBox="0 0 14 20" fill="none" stroke="#333" stroke-width="1.200"><rect x="4.500" y="1.500" width="5" height="10"/><rect x="4.500" y="5" width="5" height="7" fill="#333"/><path d="M2 9v5.500h10V9M7 14.500v4M4 18.500h6"/></svg>
        </div>
        <div class="apps">
          ${app(svg`<g stroke="#fff" stroke-width="1.300"><path d="M7 11.500h10v7H7zM7 7v2h10V7M7 23v-2h10v2M21 7v3M21 15v8"/></g><path d="M19.500 11h3v3h-3z" fill="#fff"/>`)}
          ${app(svg`<path fill="#0c7cd8" d="M5 13.500C6 7.500 10 4 15.500 4 21.500 4 25 8.500 25 14v2.500H11.500c.2 3.500 3 5 6.300 5 2.300 0 4.300-.6 6-1.600v4.600c-2 1-4.300 1.500-6.800 1.500-6 0-10-3.500-10-9 0-3.500 1.800-6 4.500-7.500C8.800 10 6.500 11.500 5 13.500zm7-.8h7.300c0-2.700-1.200-4-3.400-4-2.200 0-3.500 1.500-3.900 4z"/>`)}
          ${app(svg`<path d="M4.500 4.500h8l2 2h11V25h-21z" fill="#f2c14c"/><path d="M4.500 8h21v17h-21z" fill="#fde79a"/><path d="M8 26v-10c0-1 .5-1.500 1.500-1.500h11c1 0 1.500.5 1.500 1.500v10h-4v-6h-6v6z" fill="#3db3e8"/>`, "run")}
          ${app(svg`<path d="M11 8V6q0-3 4-3t4 3v2" stroke="#fff" stroke-width="1.400"/><path d="M4 8h22v16c0 1-1 2-2 2H6c-1 0-2-1-2-2z" fill="#fff"/><path d="M9.500 11h5v5h-5z" fill="#f25022"/><path d="M15.500 11h5v5h-5z" fill="#7fba00"/><path d="M9.500 17.500h5v5h-5z" fill="#00a4ef"/><path d="M15.500 17.500h5v5h-5z" fill="#ffb900"/>`)}
          ${app(svg`<path d="M3 11.500L15 4.500l12 7V25H3z" fill="#fff"/><path d="M4 11.500h22l-7 5.500 2 3.500z" fill="#0e0e0e"/>`)}
          ${app(svg`<path d="M8 19h14l3 6.500H5z" fill="#f57c00"/><path d="M14 4h2l5 16q-6 3.500-12 0z" fill="#f78b12"/><path d="M12.700 8.500h4.600l1.200 4h-7zM10.500 15.500h9l.9 3q-5 2.500-10.800 0z" fill="#eee"/>`)}
          ${app(svg`<circle cx="15" cy="15" r="12" fill="#2fa350"/><path d="M4.600 9L9.800 18 15 9h10.400A12 12 0 0 0 4.600 9z" fill="#e83b2e"/><path d="M15 9.500h10.700A12 12 0 0 1 15 27l5-9z" fill="#fcc31e"/><circle cx="15" cy="15" r="6" fill="#fff"/><circle cx="15" cy="15" r="4.700" fill="#2f78ec"/>`, "run")}
          ${app(svg`<circle cx="15" cy="15" r="12" fill="#fff"/><path d="M8 22.500l1-4a7 7 0 1 1 2.700 2.800z" stroke="#25b85a" stroke-width="1.500"/><path d="M12 11.500c-1 1 0 3 2 5s4 2.500 5 1.200l.2-1.200-2-1-1 1c-1.500-.6-2.500-1.500-3-2.800l.8-1-.8-1.700z" fill="#25b85a"/>`)}
          ${app(svg`<rect x="4" y="4" width="22" height="22" fill="#f4f4f4"/>${mark(15, 15, 1.2, BLUES, 1.2)}`, "cur")}
          ${app(svg`<rect x="4.600" y="4.600" width="21" height="21" stroke="#fff" stroke-width="1.200"/><path d="M4.500 20l7-8 5 6 3.500-4 5.500 6v5.500h-21z" fill="#fff"/>`, "run")}
        </div>
        <div class="tray">${TRAY.map(([, v]) => v)}</div>
        <span class="edge"></span>
      </div>`;
  }
}
